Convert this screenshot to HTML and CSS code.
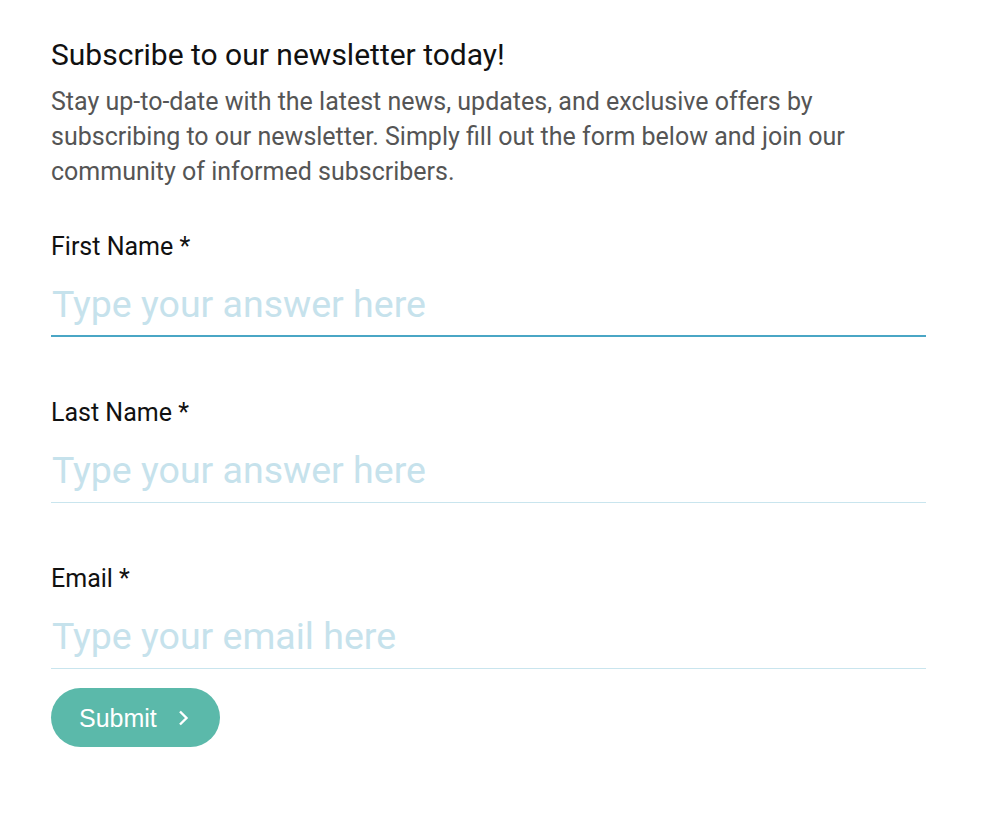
FILE: index.html
```html
<!DOCTYPE html>
<html>
<head>
<meta charset="utf-8">
<link rel="stylesheet" href="styles.css">
</head>
<body>
<div class="form">
  <h1 class="title">Subscribe to our newsletter today!</h1>
  <p class="intro">Stay up-to-date with the latest news, updates, and exclusive offers by subscribing to our newsletter. Simply fill out the form below and join our community of informed subscribers.</p>
  <div class="field">
    <label class="label">First Name *</label>
    <input class="input active" type="text" placeholder="Type your answer here">
  </div>
  <div class="field">
    <label class="label">Last Name *</label>
    <input class="input" type="text" placeholder="Type your answer here">
  </div>
  <div class="field last">
    <label class="label">Email *</label>
    <input class="input" type="email" placeholder="Type your email here">
  </div>
  <button class="submit"><span class="submit-text">Submit</span>
    <svg class="chev" width="11" height="18" viewBox="0 0 11 18"><path d="M2 2.5 L8.5 9 L2 15.5" fill="none" stroke="#fff" stroke-width="2.4"/></svg>
  </button>
</div>
</body>
</html>
```
FILE: styles.css
```css
* { box-sizing: border-box; }
body {
  margin: 0;
  background: #fff;
  font-family: Roboto, "Noto Sans", sans-serif;
}
.form {
  padding: 36px 55px 0 51px;
  width: 981px;
}
.title {
  margin: 0;
  font-size: 30px;
  font-weight: 400;
  line-height: 38px;
  color: #111;
}
.intro {
  margin: 10px 0 0;
  font-size: 25px;
  line-height: 35px;
  color: #555;
  max-width: 820px;
}
.field {
  display: flex;
  flex-direction: column;
  margin-top: 43px;
}
.field + .field { margin-top: 61px; }
.label {
  font-size: 25px;
  line-height: 30px;
  color: #111;
}
.input {
  border: none;
  border-bottom: 1px solid #c9e5ee;
  outline: none;
  font-family: Roboto, "Noto Sans", sans-serif;
  font-size: 37.5px;
  padding: 20px 0 10px 1px;
  line-height: 44px;
  height: 75px;
  color: #333;
  background: transparent;
}
.input.active { border-bottom: 2px solid #4aa6c5; padding-bottom: 9px; }
.input::placeholder { color: #c6e2ec; }
.submit {
  margin-top: 19px;
  display: inline-flex;
  align-items: center;
  gap: 21px;
  height: 59px;
  padding: 0 31px 0 28px;
  border: none;
  border-radius: 30px;
  background: #5bb9aa;
  color: #fff;
  font-family: "Liberation Sans", Arial, sans-serif;
  font-size: 25px;
}
.submit-text { line-height: 30px; }
```
